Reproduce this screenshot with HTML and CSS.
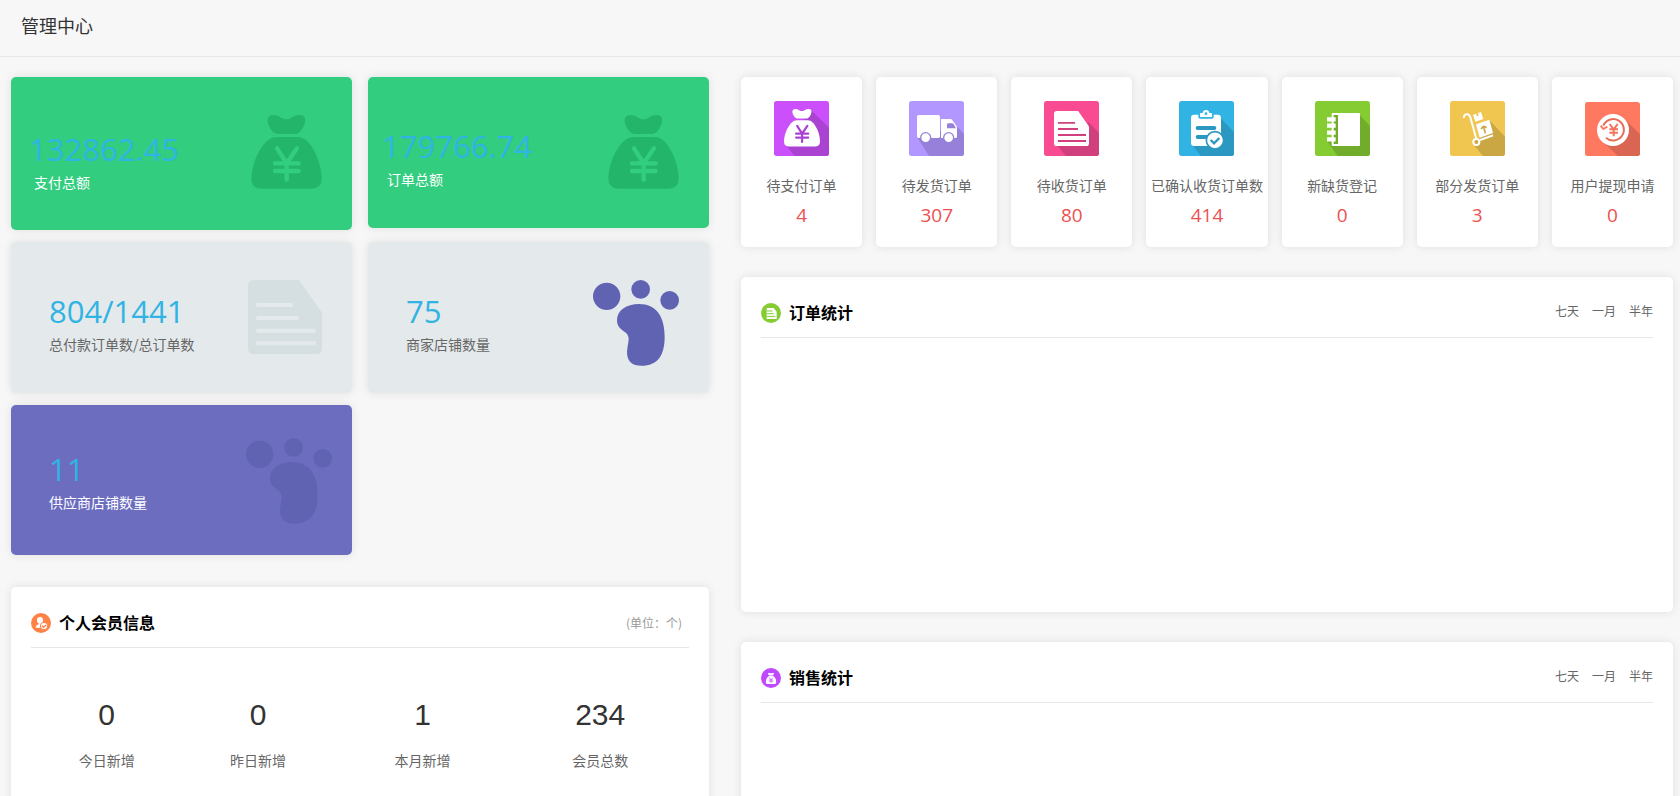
FILE: index.html
```html
<!DOCTYPE html>
<html lang="zh-CN">
<head>
<meta charset="utf-8">
<title>管理中心</title>
<link rel="stylesheet" href="styles.css">
</head>
<body>
<svg class="sprite" aria-hidden="true">
  <symbol id="bag" viewBox="0 0 211 222">
    <path fill="currentColor" d="M66 0C85 0 90 13 105 13S125 0 145 0C158 0 163 8 161 20C158 36 148 50 141 54Q138 57 132 57H80Q74 57 70 54C62 50 52 36 49 20C48 8 54 0 66 0Z"/>
    <path fill="currentColor" d="M75 66H140C180 66 211 145 211 190Q211 221 180 221H31Q0 221 0 190C0 145 34 66 75 66Z"/>
    <path class="bag-yen" d="M77 100L106 145L137 100M106 145V194M71 145H142M71 168H142"/>
  </symbol>
  <symbol id="doc" viewBox="0 0 222 222">
    <path fill="currentColor" d="M18 0H153L222 98V204Q222 222 204 222H18Q0 222 0 204V18Q0 0 18 0Z"/>
    <path class="doc-line" d="M25 75H134M25 114H152M25 152H203M25 190H203"/>
  </symbol>
  <symbol id="foot" viewBox="0 0 258 258">
    <g fill="currentColor">
      <circle cx="41" cy="49" r="41"/><circle cx="143" cy="28" r="28"/><circle cx="230" cy="61" r="28"/>
      <path d="M138 72C190 72 215 110 215 170C215 225 195 257 145 257C118 257 102 245 102 215C104 195 107 185 107 175C106 150 72 155 72 120C72 92 100 72 138 72Z"/>
    </g>
  </symbol>
</svg>

<header class="page-header"><h1>管理中心</h1></header>

<main class="dashboard">
  <div class="column">
    <section class="stats">
      <article class="stat stat--green stat--tall">
        <div class="stat__text"><p class="stat__number">132862.45</p><p class="stat__label">支付总额</p></div>
        <svg class="stat__icon stat__icon--bag"><use href="#bag"/></svg>
      </article>
      <article class="stat stat--green stat--total">
        <div class="stat__text"><p class="stat__number">179766.74</p><p class="stat__label">订单总额</p></div>
        <svg class="stat__icon stat__icon--bag"><use href="#bag"/></svg>
      </article>
      <article class="stat stat--grey">
        <div class="stat__text"><p class="stat__number">804/1441</p><p class="stat__label">总付款订单数/总订单数</p></div>
        <svg class="stat__icon stat__icon--doc"><use href="#doc"/></svg>
      </article>
      <article class="stat stat--grey">
        <div class="stat__text"><p class="stat__number">75</p><p class="stat__label">商家店铺数量</p></div>
        <svg class="stat__icon stat__icon--foot"><use href="#foot"/></svg>
      </article>
      <article class="stat stat--purple">
        <div class="stat__text"><p class="stat__number">11</p><p class="stat__label">供应商店铺数量</p></div>
        <svg class="stat__icon stat__icon--foot"><use href="#foot"/></svg>
      </article>
    </section>

    <section class="panel">
      <div class="panel__head">
        <svg class="panel__icon" viewBox="0 0 60 60"><circle cx="30" cy="30" r="30" fill="#ff8247"/><ellipse cx="27" cy="22" rx="9" ry="10" fill="#fff"/><path fill="#fff" d="M23 28H31V33L38 38V44H14Q14 37 23 34Z"/><circle cx="39" cy="39" r="11" fill="#fff" stroke="#ff8247" stroke-width="3"/><path d="M33 38L38 43L45 36" fill="none" stroke="#ff8247" stroke-width="4"/></svg>
        <h2>个人会员信息</h2>
        <span class="panel__unit">(单位：个)</span>
      </div>
      <dl class="members">
        <div><dt>今日新增</dt><dd>0</dd></div>
        <div><dt>昨日新增</dt><dd>0</dd></div>
        <div><dt>本月新增</dt><dd>1</dd></div>
        <div><dt>会员总数</dt><dd>234</dd></div>
      </dl>
    </section>
  </div>

  <div class="column">
    <section class="orders">
      <article class="order">
        <svg class="order__icon order__icon--pay" viewBox="0 0 165 165"><rect width="165" height="165" rx="8" fill="#cb4ffa"/><path d="M110 26L165 80V157Q165 165 157 165H62L38 136Z" fill="#ab43d2"/><use href="#bag" x="30" y="23" width="108" height="115"/></svg>
        <p class="order__label">待支付订单</p><p class="order__count">4</p>
      </article>
      <article class="order">
        <svg class="order__icon" viewBox="0 0 165 165"><rect width="165" height="165" rx="8" fill="#b197ff"/><path d="M143 76L165 99V157Q165 165 157 165H60L26 111Z" fill="#9780da"/><rect x="24" y="42" width="69" height="69" rx="5" fill="#fff"/><path d="M96 54H124Q128 54 130 58L142 74Q144 77 144 81V107Q144 111 140 111H96Z" fill="#fff"/><path d="M118 67H130Q132 67 134 70L141 82H114V71Q114 67 118 67Z" fill="#9780da"/><g fill="#fff" stroke="#9780da" stroke-width="4"><circle cx="50" cy="110" r="15"/><circle cx="119" cy="110" r="15"/></g></svg>
        <p class="order__label">待发货订单</p><p class="order__count">307</p>
      </article>
      <article class="order">
        <svg class="order__icon order__icon--receive" viewBox="0 0 165 165"><rect width="165" height="165" rx="8" fill="#f84b92"/><path d="M134 64L165 96V157Q165 165 157 165H66L38 132Z" fill="#d0407c"/><use href="#doc" x="30" y="30" width="105" height="105"/></svg>
        <p class="order__label">待收货订单</p><p class="order__count">80</p>
      </article>
      <article class="order">
        <svg class="order__icon" viewBox="0 0 165 165"><rect width="165" height="165" rx="8" fill="#31b4e4"/><path d="M124 50L165 94V157Q165 165 157 165H66L40 132Z" fill="#2b98c1"/><rect x="36" y="41" width="90" height="94" rx="9" fill="#fff"/><path d="M58 36H104V48Q104 53 99 53H63Q58 53 58 48Z" fill="#31b4e4"/><path d="M65 36H71Q72 27 81 27T91 36H97Q99 36 99 39V48H63V39Q63 36 65 36Z" fill="#fff"/><circle cx="81" cy="38" r="4" fill="#31b4e4"/><path d="M56 81H106M56 108H84" stroke="#2b98c1" stroke-width="12" stroke-linecap="round"/><circle cx="108" cy="118" r="26" fill="#fff" stroke="#2b98c1" stroke-width="5"/><path d="M95 117L105 127L121 111" fill="none" stroke="#2b98c1" stroke-width="7"/></svg>
        <p class="order__label">已确认收货订单数</p><p class="order__count">414</p>
      </article>
      <article class="order">
        <svg class="order__icon" viewBox="0 0 165 165"><rect width="165" height="165" rx="8" fill="#85cc32"/><path d="M134 42L165 74V157Q165 165 157 165H68L37 121Z" fill="#71ad2b"/><rect x="50" y="36" width="85" height="99" rx="3" fill="#fff"/><path d="M56 42H69V129H56Z" fill="#71ad2b"/><path d="M36 55H62M36 74H62M36 95H62M36 115H62" stroke="#fff" stroke-width="13"/></svg>
        <p class="order__label">新缺货登记</p><p class="order__count">0</p>
      </article>
      <article class="order">
        <svg class="order__icon" viewBox="0 0 165 165"><rect width="165" height="165" rx="8" fill="#f0c550"/><path d="M120 59L165 107V157Q165 165 157 165H99L72 132L98 100Z" fill="#cba743"/><path d="M42 51C40 38 57 35 61 49L79 114" fill="none" stroke="#fff" stroke-width="6"/><circle cx="79" cy="123" r="9" fill="#cba743" stroke="#fff" stroke-width="6"/><path d="M90 117L129 103" stroke="#fff" stroke-width="6"/><path d="M69 41L78 38L81 46L86 44L84 36L93 33L100 54L76 62ZM78 70L118 56L129 96L89 110Z" fill="#fff"/><path d="M106 97L101 78M93 84L100 76L110 79" fill="none" stroke="#cba743" stroke-width="5"/></svg>
        <p class="order__label">部分发货订单</p><p class="order__count">3</p>
      </article>
      <article class="order">
        <svg class="order__icon" viewBox="0 0 165 165"><rect y="3" width="165" height="162" rx="8" fill="#ff7860"/><path d="M118 53L165 100V157Q165 165 157 165H99L54 123Z" fill="#d96652"/><circle cx="84" cy="87" r="48" fill="#fff"/><path d="M55 74A32 32 0 1 1 63 110" fill="none" stroke="#e86d57" stroke-width="6"/><path d="M47 74L55 84L67 77" fill="none" stroke="#ff7860" stroke-width="6"/><path d="M74 69L86 85L98 69M86 85V106M73 85H99M73 95H99" fill="none" stroke="#f3735c" stroke-width="6"/></svg>
        <p class="order__label">用户提现申请</p><p class="order__count">0</p>
      </article>
    </section>

    <section class="panel panel--chart">
      <div class="panel__head">
        <svg class="panel__icon panel__icon--order" viewBox="0 0 60 60"><circle cx="30" cy="30" r="30" fill="#85cc32"/><path d="M17 15H38L47 26V48H17Z" fill="#fff"/><path d="M17 24H34M17 32H38M17 40H43" stroke="#85cc32" stroke-width="3"/></svg>
        <h2>订单统计</h2>
        <nav class="ranges"><a href="#week">七天</a><a href="#month">一月</a><a href="#half">半年</a></nav>
      </div>
    </section>

    <section class="panel panel--chart">
      <div class="panel__head">
        <svg class="panel__icon panel__icon--sales" viewBox="0 0 60 60"><circle cx="30" cy="30" r="30" fill="#bf49ff"/><use href="#bag" x="14" y="14" width="32" height="34"/></svg>
        <h2>销售统计</h2>
        <nav class="ranges"><a href="#sales-week">七天</a><a href="#sales-month">一月</a><a href="#sales-half">半年</a></nav>
      </div>
    </section>
  </div>
</main>
</body>
</html>
```
FILE: styles.css
```css
* { box-sizing: border-box; }
html { overflow: hidden; }
body {
  margin: 0;
  height: 100vh;
  overflow: hidden;
  background: #f7f7f7;
  color: #666;
  font: 14px/20px "Noto Sans CJK SC", sans-serif;
}
h1, h2, p, dl, dd { margin: 0; }
a { color: inherit; text-decoration: none; }
.sprite { display: none; }

.page-header {
  padding: 11px 21px 17px;
  border-bottom: 1px solid #e4e9e8;
}
.page-header h1 { color: #333; font-size: 18px; font-weight: 400; line-height: 28px; }

.dashboard {
  display: grid;
  grid-template-columns: minmax(0, 349fr) minmax(0, 466fr);
  gap: 32px;
  padding: 20px 7px 0 11px;
}
.column { display: flex; flex-direction: column; }
.stat, .panel, .order {
  border-radius: 5px;
  box-shadow: 0 0 10px rgba(0, 0, 0, 0.1);
}

.stats {
  display: grid;
  grid-template-columns: 1fr 1fr;
  align-items: start;
  gap: 12px 16px;
  margin-bottom: 32px;
}
.stat {
  display: flex;
  justify-content: space-between;
  align-items: flex-start;
  min-height: 151px;
  padding: 38px 30px 0 38px;
}
.stat__text { padding-top: 8px; }
.stat__number { color: #31b4e4; font-family: "Open Sans", sans-serif; font-size: 31px; line-height: 46px; }
.stat__label { line-height: 20px; }
.stat__icon { flex: none; }
.stat__icon--bag { width: 71px; height: 74px; }
.stat__icon--doc { width: 74px; height: 74px; color: #d5dfe1; }
.stat__icon--foot { width: 86px; height: 86px; color: #6063b2; }
.stat--green { padding-left: 18px; background: #32cd7f; }
.stat--green .stat__label { padding-left: 5px; color: #fff; }
.stat--green .stat__icon { color: #23b66b; --mark: #32cd7f; }
.stat--tall { min-height: 153px; }
.stat--tall .stat__text { padding-top: 11px; }
.stat--total { padding-left: 14px; }
.stat--grey { background: #e4e9eb; --mark: #e4e9eb; }
.stat--purple { min-height: 150px; padding-top: 33px; padding-right: 20px; background: #6c6dbf; }
.stat--purple .stat__label { color: #fff; }

.bag-yen, .doc-line { fill: none; stroke: var(--mark); }
.bag-yen { stroke-width: 13px; stroke-linecap: round; stroke-linejoin: round; }
.doc-line { stroke-width: 12px; }

.panel { padding: 0 20px; background: #fff; }
.panel--chart { height: 335px; margin-bottom: 30px; }
.panel__head {
  display: flex;
  align-items: center;
  height: 61px;
  padding-top: 12px;
  border-bottom: 1px solid #e4e8e9;
}
.panel__icon { width: 20px; height: 20px; margin-right: 8px; color: #fff; }
.panel__icon--sales { --mark: #bf49ff; }
.panel__head h2 { padding-bottom: 2px; color: #000; font-size: 16px; font-weight: 700; line-height: 24px; }
.panel__unit { margin-left: auto; padding-right: 7px; color: #999; font-size: 12px; }
.ranges { display: flex; gap: 13px; margin-left: auto; padding-bottom: 4px; font-size: 12px; }

.members {
  display: grid;
  grid-template-columns: 23fr 23fr 27fr 27fr;
  padding: 46px 0 40px;
  text-align: center;
}
.members div { display: flex; flex-direction: column-reverse; gap: 14px; }
.members dd { color: #333; font: 30px/42px "Liberation Sans", sans-serif; }

.orders {
  display: grid;
  grid-template-columns: repeat(7, minmax(0, 1fr));
  gap: 14px;
  margin-bottom: 30px;
}
.order {
  display: flex;
  flex-direction: column;
  align-items: center;
  padding: 24px 0 17px;
  background: #fff;
  white-space: nowrap;
}
.order__icon { width: 55px; height: 55px; margin-bottom: 19px; color: #fff; }
.order__icon--pay { --mark: #ab43d2; }
.order__icon--receive { --mark: #d0407c; }
.order__count { margin-top: 5px; color: #ec5151; font-family: "Open Sans", sans-serif; font-size: 19px; line-height: 30px; }
```
